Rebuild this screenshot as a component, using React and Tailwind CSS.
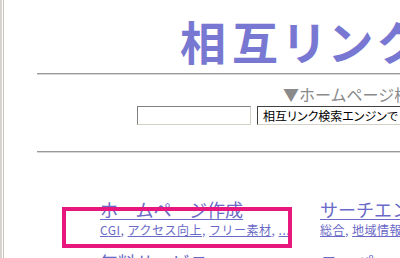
export default function App() {
  const jp = "font-['Noto_Sans_CJK_JP','Noto_Sans_CJK_SC',sans-serif]";
  return (
    <div className={`flex h-[258px] w-[400px] overflow-hidden bg-white ${jp}`}>
      <div className="flex h-full shrink-0">
        <div className="w-[2px] bg-[#d6d3ce]" />
        <div className="w-[1px] bg-white" />
        <div className="w-[1px] bg-[#c8c4bc]" />
      </div>
      <div className="relative flex min-w-0 flex-1 flex-col">
        <div className="mt-[17px] whitespace-nowrap pl-[176px] text-[46px] font-bold leading-[46px] tracking-[6px] text-[#7878d2] [font-feature-settings:'palt']">
          相互リンク検索エンジン
        </div>
        <div className="ml-[33px] mt-[10px] w-[600px] shrink-0 border-t border-b border-t-[#999999] border-b-[#d8d8d8]" />
        <div className="mt-[10px] whitespace-nowrap pl-[279px] text-[16px] leading-[18px] text-[#8a8a8a]">
          ▼ホームページ検索
        </div>
        <div className="mt-[3px] flex items-center gap-[6px] whitespace-nowrap pl-[133px]">
          <div className="h-[19px] w-[114px] shrink-0 border-t border-l border-t-[#808080] border-l-[#808080] border-r border-b border-r-[#d4d0c8] border-b-[#d4d0c8] bg-white" />
          <div className="flex h-[19px] w-[200px] shrink-0 items-center border border-[#404040] border-r-[#d4d0c8] border-b-[#d4d0c8] bg-white pl-[5px] text-[12px] leading-[14px] text-black [font-feature-settings:'palt']">
            相互リンク検索エンジンで
          </div>
        </div>
        <div className="ml-[33px] mt-[26px] w-[600px] shrink-0 border-t border-b border-t-[#999999] border-b-[#d8d8d8]" />
        <div className="mt-[46px] flex whitespace-nowrap pl-[96px] text-[#6a6ac8]">
          <div className="w-[220px] shrink-0">
            <div className="text-[18px] leading-[20px] underline underline-offset-2">ホームページ作成</div>
            <div className="mt-[4px] text-[12px] leading-[14px] tracking-[0.5px]">
              <span className="underline">CGI</span>, <span className="underline">アクセス向上</span>, <span className="underline">フリー素材</span>, <span className="underline">...</span>
            </div>
          </div>
          <div className="w-[220px] shrink-0">
            <div className="text-[18px] leading-[20px] underline underline-offset-2">サーチエンジン</div>
            <div className="mt-[4px] text-[12px] leading-[14px] tracking-[0.5px]">
              <span className="underline">総合</span>, <span className="underline">地域情報</span>, <span className="underline">...</span>
            </div>
          </div>
        </div>
        <div className="mt-[15px] flex whitespace-nowrap pl-[96px] text-[#6a6ac8]">
          <div className="w-[220px] shrink-0 text-[18px] leading-[20px] underline">無料サービス</div>
          <div className="w-[220px] shrink-0 text-[18px] leading-[20px] underline">スーパー</div>
        </div>
        <div className="pointer-events-none absolute left-[58px] top-[207px] h-[41px] w-[230px] border-[4px] border-[#e8177d]" />
      </div>
    </div>
  );
}
